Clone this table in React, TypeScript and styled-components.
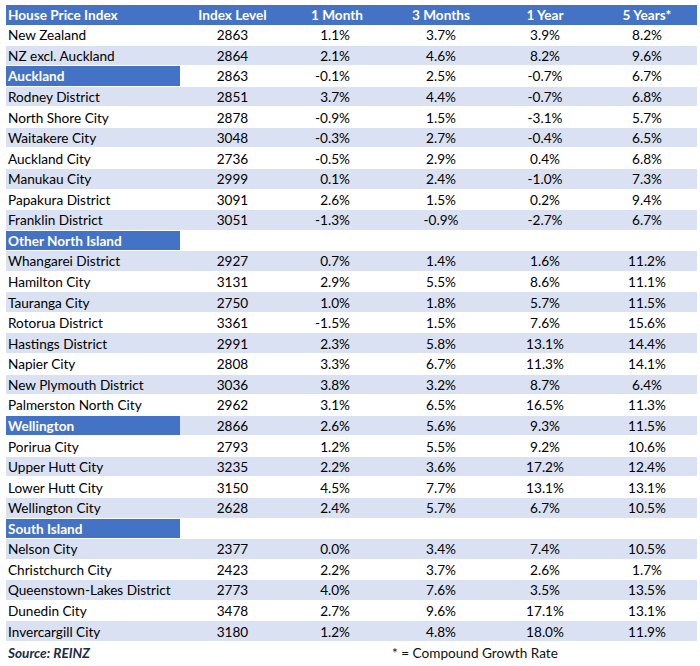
import styled, { createGlobalStyle } from "styled-components";

type Align = "left" | "center" | "right";

type DataRow = {
  name: string;
  section?: boolean;
  values: [string, string, string, string, string];
};

const rows: DataRow[] = [
  { name: "New Zealand", values: ["2863", "1.1%", "3.7%", "3.9%", "8.2%"] },
  { name: "NZ excl. Auckland", values: ["2864", "2.1%", "4.6%", "8.2%", "9.6%"] },
  { name: "Auckland", section: true, values: ["2863", "-0.1%", "2.5%", "-0.7%", "6.7%"] },
  { name: "Rodney District", values: ["2851", "3.7%", "4.4%", "-0.7%", "6.8%"] },
  { name: "North Shore City", values: ["2878", "-0.9%", "1.5%", "-3.1%", "5.7%"] },
  { name: "Waitakere City", values: ["3048", "-0.3%", "2.7%", "-0.4%", "6.5%"] },
  { name: "Auckland City", values: ["2736", "-0.5%", "2.9%", "0.4%", "6.8%"] },
  { name: "Manukau City", values: ["2999", "0.1%", "2.4%", "-1.0%", "7.3%"] },
  { name: "Papakura District", values: ["3091", "2.6%", "1.5%", "0.2%", "9.4%"] },
  { name: "Franklin District", values: ["3051", "-1.3%", "-0.9%", "-2.7%", "6.7%"] },
  { name: "Other North Island", section: true, values: ["", "", "", "", ""] },
  { name: "Whangarei District", values: ["2927", "0.7%", "1.4%", "1.6%", "11.2%"] },
  { name: "Hamilton City", values: ["3131", "2.9%", "5.5%", "8.6%", "11.1%"] },
  { name: "Tauranga City", values: ["2750", "1.0%", "1.8%", "5.7%", "11.5%"] },
  { name: "Rotorua District", values: ["3361", "-1.5%", "1.5%", "7.6%", "15.6%"] },
  { name: "Hastings District", values: ["2991", "2.3%", "5.8%", "13.1%", "14.4%"] },
  { name: "Napier City", values: ["2808", "3.3%", "6.7%", "11.3%", "14.1%"] },
  { name: "New Plymouth District", values: ["3036", "3.8%", "3.2%", "8.7%", "6.4%"] },
  { name: "Palmerston North City", values: ["2962", "3.1%", "6.5%", "16.5%", "11.3%"] },
  { name: "Wellington", section: true, values: ["2866", "2.6%", "5.6%", "9.3%", "11.5%"] },
  { name: "Porirua City", values: ["2793", "1.2%", "5.5%", "9.2%", "10.6%"] },
  { name: "Upper Hutt City", values: ["3235", "2.2%", "3.6%", "17.2%", "12.4%"] },
  { name: "Lower Hutt City", values: ["3150", "4.5%", "7.7%", "13.1%", "13.1%"] },
  { name: "Wellington City", values: ["2628", "2.4%", "5.7%", "6.7%", "10.5%"] },
  { name: "South Island", section: true, values: ["", "", "", "", ""] },
  { name: "Nelson City", values: ["2377", "0.0%", "3.4%", "7.4%", "10.5%"] },
  { name: "Christchurch City", values: ["2423", "2.2%", "3.7%", "2.6%", "1.7%"] },
  { name: "Queenstown-Lakes District", values: ["2773", "4.0%", "7.6%", "3.5%", "13.5%"] },
  { name: "Dunedin City", values: ["3478", "2.7%", "9.6%", "17.1%", "13.1%"] },
  { name: "Invercargill City", values: ["3180", "1.2%", "4.8%", "18.0%", "11.9%"] },
];

const headers = ["Index Level", "1 Month", "3 Months", "1 Year", "5 Years*"];
const valueAlign: Align[] = ["center", "right", "center", "center", "center"];

const GlobalStyle = createGlobalStyle`
  body {
    margin: 0;
    background: #ffffff;
    font-family: "Lato", "Liberation Sans", sans-serif;
  }
`;

const Page = styled.div`
  padding: 5px 3px 0 6px;
  width: 691px;
`;

const Table = styled.div`
  display: flex;
  flex-direction: column;
`;

const Row = styled.div<{ $striped?: boolean }>`
  display: grid;
  grid-template-columns: 174px 105px 104px 104px 104px 100px;
  height: 20.57px;
  background: ${(p) => (p.$striped ? "#d9e1f2" : "#ffffff")};
  border-bottom: 1px solid #ffffff;
  box-sizing: border-box;
`;

const HeaderRow = styled(Row)`
  height: 20px;
  background: #4472c4;
  border-bottom: none;
`;

const Cell = styled.div<{ $align?: Align; $padRight?: number }>`
  display: flex;
  align-items: center;
  justify-content: ${(p) =>
    p.$align === "right" ? "flex-end" : p.$align === "center" ? "center" : "flex-start"};
  padding: 1px ${(p) => p.$padRight ?? 2}px 0 2px;
  font-size: 13.6px;
  color: #000000;
  white-space: nowrap;
`;

const HeadCell = styled(Cell)`
  padding-top: 0;
  color: #ffffff;
  font-weight: 700;
`;

const SectionCell = styled(Cell)`
  background: #4472c4;
  color: #ffffff;
  font-weight: 700;
`;

const Footer = styled.div`
  display: grid;
  grid-template-columns: 386px 1fr;
  height: 22px;
  align-items: center;
  font-size: 13.6px;
`;

const Source = styled.span`
  padding-left: 2px;
  font-weight: 700;
  font-style: italic;
  color: #1c2a48;
`;

const Note = styled.span`
  color: #111111;
`;

export default function App() {
  return (
    <>
      <GlobalStyle />
      <Page>
        <Table>
          <HeaderRow>
            <HeadCell>House Price Index</HeadCell>
            {headers.map((h) => (
              <HeadCell key={h} $align="center">
                {h}
              </HeadCell>
            ))}
          </HeaderRow>
          {rows.map((r, i) => {
            const NameCell = r.section ? SectionCell : Cell;
            return (
              <Row key={r.name} $striped={i % 2 === 1}>
                <NameCell>{r.name}</NameCell>
                {r.values.map((v, j) => (
                  <Cell key={j} $align={valueAlign[j]} $padRight={j === 1 ? 39 : 2}>
                    {v}
                  </Cell>
                ))}
              </Row>
            );
          })}
        </Table>
        <Footer>
          <Source>Source: REINZ</Source>
          <Note>* = Compound Growth Rate</Note>
        </Footer>
      </Page>
    </>
  );
}
